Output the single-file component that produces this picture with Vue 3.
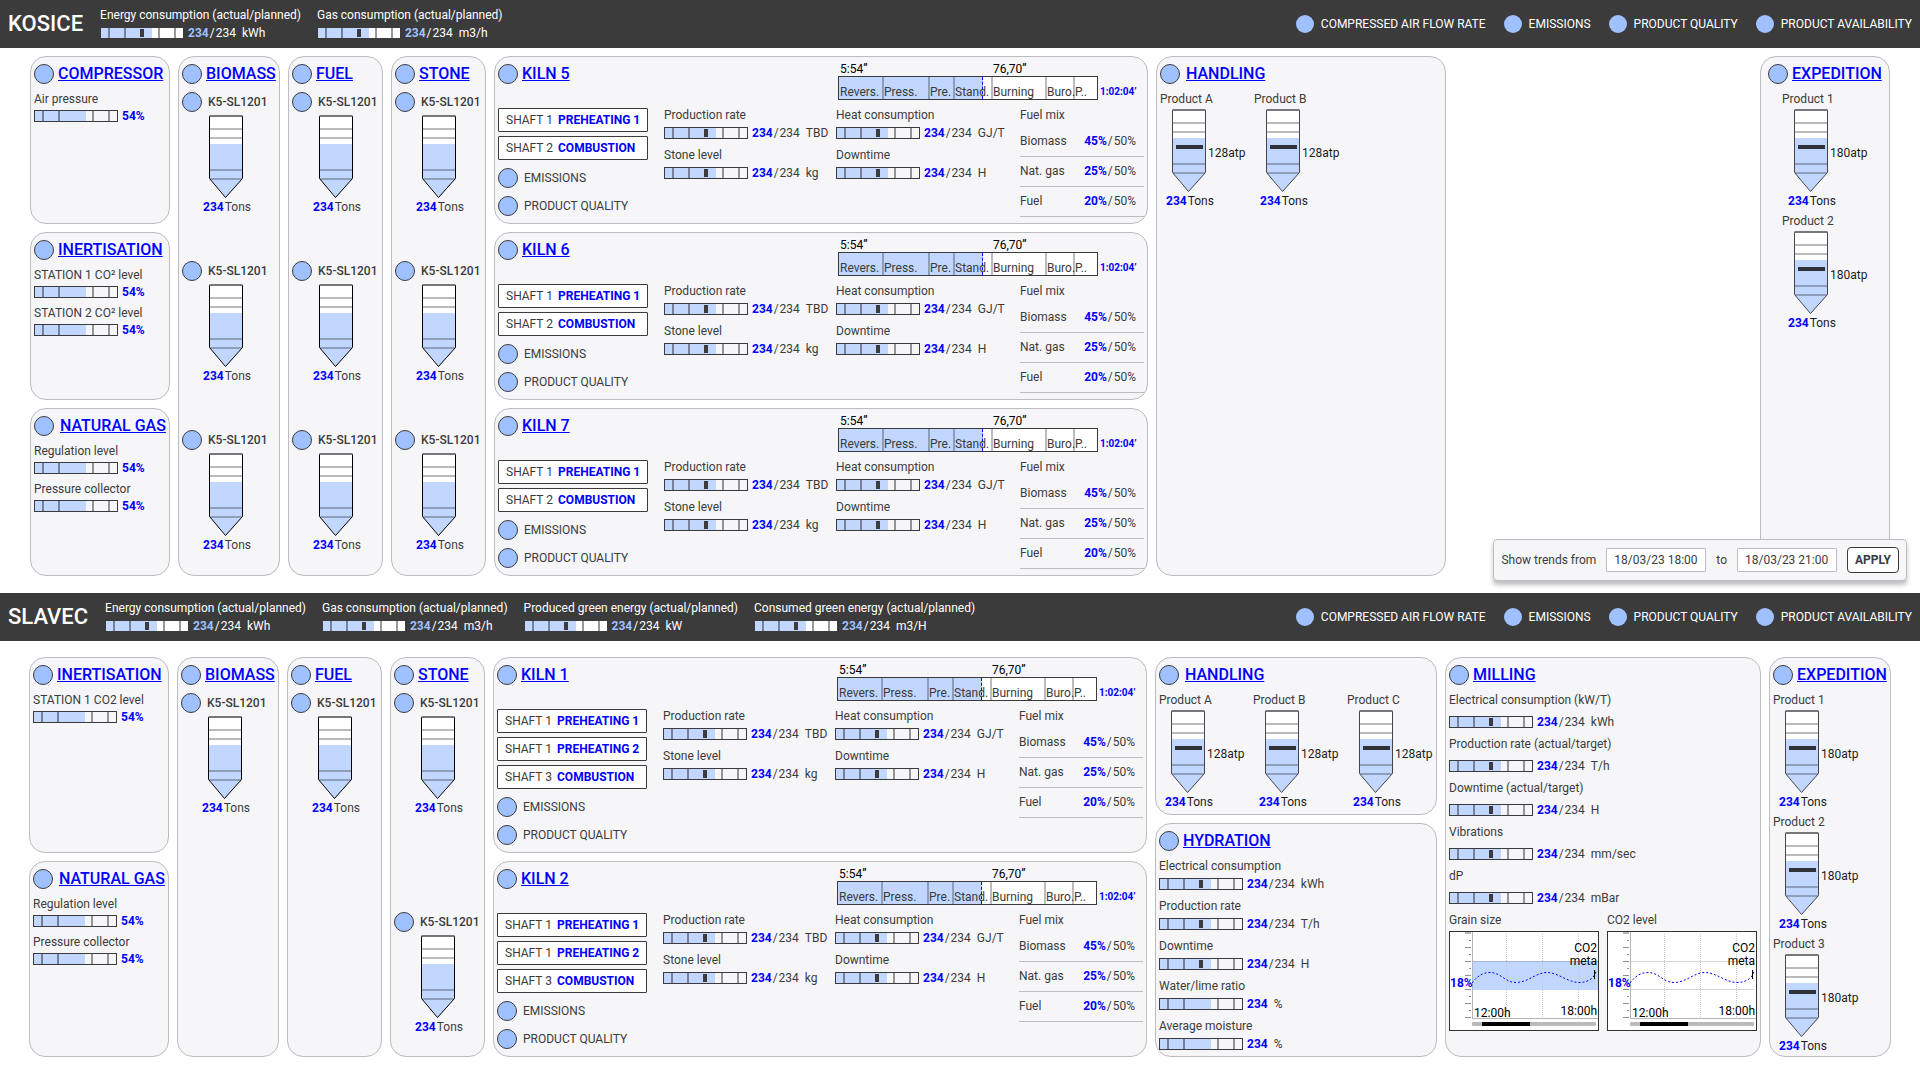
<script setup>
const actual = (label, unit) => ({ label, actual: '234', planned: '234', unit, mark: true })
const ratio = (label) => ({ label, actual: '234', unit: '%' })
const percent = (label) => ({ label, actual: '54%' })

const silo = () => ({ code: 'K5-SL1201', tons: '234' })
const product = (name, target) => ({ label: `Product ${name}`, target, tons: '234' })

const phases = [
  { name: 'Revers.', width: 43 },
  { name: 'Press.', width: 46 },
  { name: 'Pre.', width: 25 },
  { name: 'Stand.', width: 38 },
  { name: 'Burning', width: 54 },
  { name: 'Buro.', width: 28 },
  { name: 'P..', width: 24 },
]

const kilnMeters = [
  [actual('Production rate', 'TBD'), actual('Stone level', 'kg')],
  [actual('Heat consumption', 'GJ/T'), actual('Downtime', 'H')],
]

const fuelMix = [
  { name: 'Biomass', actual: '45%' },
  { name: 'Nat. gas', actual: '25%' },
  { name: 'Fuel', actual: '20%' },
]

const kiln = (number, shafts) => ({ title: `KILN ${number}`, type: 'kiln', shafts })
const twoShafts = [
  { name: 'SHAFT 1', state: 'PREHEATING 1' },
  { name: 'SHAFT 2', state: 'COMBUSTION' },
]
const threeShafts = [
  { name: 'SHAFT 1', state: 'PREHEATING 1' },
  { name: 'SHAFT 1', state: 'PREHEATING 2' },
  { name: 'SHAFT 3', state: 'COMBUSTION' },
]

const silos = (title, count) => ({
  title,
  type: 'silos',
  silos: Array.from({ length: count }, silo),
})
const meters = (title, list, extra = {}) => ({ title, type: 'meters', meters: list, ...extra })

const naturalGas = () =>
  meters('NATURAL GAS', [percent('Regulation level'), percent('Pressure collector')], {
    tone: 'spaced',
  })

const statuses = ['COMPRESSED AIR FLOW RATE', 'EMISSIONS', 'PRODUCT QUALITY', 'PRODUCT AVAILABILITY']

const sites = [
  {
    name: 'KOSICE',
    id: 'kosice',
    trends: true,
    totals: [
      actual('Energy consumption (actual/planned)', 'kWh'),
      actual('Gas consumption (actual/planned)', 'm3/h'),
    ],
    columns: [
      {
        kind: 'utilities',
        cards: [
          meters('COMPRESSOR', [percent('Air pressure')]),
          meters('INERTISATION', [percent('STATION 1 CO² level'), percent('STATION 2 CO² level')]),
          naturalGas(),
        ],
      },
      { kind: 'biomass', cards: [silos('BIOMASS', 3)] },
      { kind: 'store', cards: [silos('FUEL', 3)] },
      { kind: 'store', cards: [silos('STONE', 3)] },
      { kind: 'kilns', cards: [kiln(5, twoShafts), kiln(6, twoShafts), kiln(7, twoShafts)] },
      {
        kind: 'handling',
        cards: [
          {
            title: 'HANDLING',
            type: 'products',
            tone: 'spaced',
            silos: [product('A', '128atp'), product('B', '128atp')],
          },
        ],
      },
      {
        kind: 'expedition',
        cards: [
          {
            title: 'EXPEDITION',
            type: 'products',
            silos: [product('1', '180atp'), product('2', '180atp')],
          },
        ],
      },
    ],
  },
  {
    name: 'SLAVEC',
    id: 'slavec',
    totals: [
      actual('Energy consumption (actual/planned)', 'kWh'),
      actual('Gas consumption (actual/planned)', 'm3/h'),
      actual('Produced green energy (actual/planned)', 'kW'),
      actual('Consumed green energy (actual/planned)', 'm3/H'),
    ],
    columns: [
      {
        kind: 'utilities',
        cards: [meters('INERTISATION', [percent('STATION 1 CO2 level')]), naturalGas()],
      },
      { kind: 'biomass', cards: [silos('BIOMASS', 1)] },
      { kind: 'store', cards: [silos('FUEL', 1)] },
      { kind: 'store', cards: [silos('STONE', 2)] },
      { kind: 'kilns', cards: [kiln(1, threeShafts), kiln(2, threeShafts)] },
      {
        kind: 'handling',
        cards: [
          {
            title: 'HANDLING',
            type: 'products',
            tone: 'spaced fitted',
            silos: [product('A', '128atp'), product('B', '128atp'), product('C', '128atp')],
          },
          meters('HYDRATION', [
            actual('Electrical consumption', 'kWh'),
            actual('Production rate', 'T/h'),
            actual('Downtime', 'H'),
            ratio('Water/lime ratio'),
            ratio('Average moisture'),
          ], { tone: 'medium' }),
        ],
      },
      {
        kind: 'milling',
        cards: [
          meters('MILLING', [
            actual('Electrical consumption (kW/T)', 'kWh'),
            actual('Production rate (actual/target)', 'T/h'),
            actual('Downtime (actual/target)', 'H'),
            actual('Vibrations', 'mm/sec'),
            actual('dP', 'mBar'),
          ], {
            tone: 'loose',
            charts: [{ label: 'Grain size', band: true }, { label: 'CO2 level' }],
          }),
        ],
      },
      {
        kind: 'expedition',
        cards: [
          {
            title: 'EXPEDITION',
            type: 'products',
            silos: [product('1', '180atp'), product('2', '180atp'), product('3', '180atp')],
          },
        ],
      },
    ],
  },
]

const majorTicks = [16, 30, 44, 58, 72, 86]
const minorTicks = [9, 23, 37, 51, 65, 79]
</script>

<template>
  <main class="page">
    <section v-for="site in sites" :key="site.id" class="site" :class="site.id">
      <header class="topbar">
        <h1>{{ site.name }}</h1>
        <div class="totals">
          <div v-for="m in site.totals" :key="m.label" class="meter">
            <span class="label">{{ m.label }}</span>
            <div class="reading">
              <span class="bar"><span class="mark"></span></span>
              <b>{{ m.actual }}</b><span class="slash">/</span><span>{{ m.planned }}</span>
              <span class="unit">{{ m.unit }}</span>
            </div>
          </div>
        </div>
        <ul class="statuses">
          <li v-for="s in statuses" :key="s"><span class="dot"></span>{{ s }}</li>
        </ul>
      </header>

      <div class="board">
        <div v-for="(column, c) in site.columns" :key="c" class="column" :class="column.kind">
          <article
            v-for="card in column.cards"
            :key="card.title"
            class="card"
            :class="[card.type, card.tone]"
          >
            <div class="head">
              <h2><span class="lamp"></span><a href="#">{{ card.title }}</a></h2>
              <div v-if="card.type === 'kiln'" class="cycle">
                <div class="cycle-times"><span>5:54”</span><span>76,70”</span></div>
                <div class="cycle-row">
                  <div class="phases">
                    <span class="progress"></span>
                    <span
                      v-for="p in phases"
                      :key="p.name"
                      class="phase"
                      :style="{ width: p.width + 'px' }"
                    >{{ p.name }}</span>
                  </div>
                  <b class="total-time">1:02:04’</b>
                </div>
              </div>
            </div>

            <div v-if="card.type === 'meters'" class="meter-list">
              <div v-for="m in card.meters" :key="m.label" class="meter">
                <span class="label">{{ m.label }}</span>
                <div class="reading">
                  <span class="bar"><span v-if="m.mark" class="mark"></span></span>
                  <b>{{ m.actual }}</b>
                  <template v-if="m.planned"><span class="slash">/</span><span>{{ m.planned }}</span></template>
                  <span v-if="m.unit" class="unit">{{ m.unit }}</span>
                </div>
              </div>
            </div>

            <div v-if="card.charts" class="charts">
              <figure v-for="chart in card.charts" :key="chart.label">
                <figcaption class="label">{{ chart.label }}</figcaption>
                <svg class="chart" width="150" height="100" viewBox="0 0 150 100">
                  <rect x="0.5" y="0.5" width="149" height="99" fill="#fff" stroke="#333" />
                  <rect v-if="chart.band" x="23" y="30" width="126" height="29" fill="#c2d7ff" />
                  <path v-if="chart.band" d="M23 30.5H149" stroke="#a9b6d0" />
                  <path v-else d="M23 30.5H147M23 58.5H147" stroke="#d5d5d8" />
                  <path d="M57.5 3V87M93.5 3V87M129.5 3V87" stroke="#c8c8d0" stroke-dasharray="1 1" />
                  <path d="M23.5 1V87.5H149" fill="none" stroke="#b5b5b9" />
                  <path d="M16 2H22" stroke="#b5b5b9" stroke-width="2" />
                  <path v-for="y in majorTicks" :key="y" :d="`M16 ${y}.5H22`" stroke="#8f8f93" />
                  <path v-for="y in minorTicks" :key="y" :d="`M20 ${y}.5H22`" stroke="#8f8f93" />
                  <path
                    d="M23 52C29 44 35 41.500 41 41.500C52 41.500 56 51.500 67 51.500C79 51.500 87 41.500 98 41.500C109 41.500 119 51.500 130 51.500C140 51.500 146 46 147 40"
                    fill="none"
                    stroke="#00f"
                    stroke-dasharray="2 2"
                  />
                  <path d="M145.500 39V48" stroke="#000" />
                  <rect x="23" y="91" width="124" height="4" rx="1" fill="#bababe" />
                  <rect x="33" y="91" width="48" height="4" fill="#000" />
                  <text x="1" y="56" class="now">18%</text>
                  <text x="148" y="21" text-anchor="end">CO2</text>
                  <text x="148" y="34" text-anchor="end">meta</text>
                  <text x="25" y="86">12:00h</text>
                  <text x="148" y="84" text-anchor="end">18:00h</text>
                </svg>
              </figure>
            </div>

            <div v-if="card.silos" class="silo-list">
              <div v-for="(s, i) in card.silos" :key="i" class="silo">
                <span v-if="s.code" class="code"><span class="lamp"></span>{{ s.code }}</span>
                <span v-else class="label">{{ s.label }}</span>
                <div class="vessel">
                  <svg width="34" height="84" viewBox="0 0 34 84">
                    <path d="M1 1H33V64L17 82.500L1 64Z" fill="#fff" />
                    <path d="M1 29H33V64L17 82.500L1 64Z" fill="#c2d7ff" />
                    <path d="M1 14H33M1 23H33M1 55H33M1 64H33" stroke="#000" stroke-opacity="0.270" stroke-width="2" />
                    <path class="outline" d="M0.500 1V63.500L16.500 82.500L33.500 63.500V1" fill="none" />
                    <path d="M0.500 1H33.500" stroke="#777" stroke-width="2" />
                    <rect v-if="s.target" x="4" y="36" width="27" height="4" fill="#30323a" />
                  </svg>
                  <span v-if="s.target" class="target">{{ s.target }}</span>
                </div>
                <span class="tons"><b>{{ s.tons }}</b>Tons</span>
              </div>
            </div>

            <div v-if="card.type === 'kiln'" class="kiln-body">
              <div class="shafts">
                <div v-for="s in card.shafts" :key="s.state" class="shaft">
                  {{ s.name }}<b>{{ s.state }}</b>
                </div>
                <div class="check first"><span class="lamp"></span>EMISSIONS</div>
                <div class="check"><span class="lamp"></span>PRODUCT QUALITY</div>
              </div>
              <div v-for="(group, g) in kilnMeters" :key="g" class="kiln-meters">
                <div v-for="m in group" :key="m.label" class="meter">
                  <span class="label">{{ m.label }}</span>
                  <div class="reading">
                    <span class="bar"><span class="mark"></span></span>
                    <b>{{ m.actual }}</b><span class="slash">/</span><span>{{ m.planned }}</span>
                    <span class="unit">{{ m.unit }}</span>
                  </div>
                </div>
              </div>
              <table class="fuel-mix">
                <caption>Fuel mix</caption>
                <tbody>
                  <tr v-for="f in fuelMix" :key="f.name">
                    <th scope="row">{{ f.name }}</th>
                    <td><b>{{ f.actual }}</b><span class="slash">/</span>50%</td>
                  </tr>
                </tbody>
              </table>
            </div>
          </article>
        </div>
      </div>

      <form v-if="site.trends" class="trends" @submit.prevent>
        <label for="trend-from">Show trends from</label>
        <input id="trend-from" type="text" value="18/03/23 18:00" />
        <label for="trend-to">to</label>
        <input id="trend-to" type="text" value="18/03/23 21:00" />
        <button type="submit">APPLY</button>
      </form>
    </section>
  </main>
</template>

<style>
body {
  margin: 0;
  background: #fff;
}
</style>

<style scoped>
.page {
  font: 400 12px/16px Roboto, sans-serif;
  color: #3b3b3b;
}
.page * {
  box-sizing: border-box;
}
.site {
  position: relative;
}
b {
  font-weight: 700;
  color: #0000ff;
}

/* Top bar */
.topbar {
  display: flex;
  align-items: center;
  height: 48px;
  padding: 0 8px;
  background: #3b3b3b;
  color: #fff;
}
.topbar h1 {
  margin: 0 17px 0 0;
  font-size: 22px;
  font-weight: 500;
  line-height: 24px;
}
.totals {
  display: flex;
  gap: 16px;
}
.topbar b {
  color: #9fc1ff;
}
.topbar .bar {
  border-color: #3b3b3b;
  background-color: #fff;
}
.statuses {
  display: flex;
  gap: 18px;
  margin: 0 0 0 auto;
  padding: 0;
  list-style: none;
}
.statuses li {
  display: flex;
  align-items: center;
  gap: 7px;
}
.dot {
  width: 18px;
  height: 18px;
  border-radius: 50%;
  background: #9fc1ff;
}

/* Board */
.board {
  display: flex;
  gap: 8px;
  padding: 8px 30px 17px;
  min-height: 545px;
}
.slavec .board {
  padding: 16px 29px 23px;
  min-height: 439px;
}
.column {
  display: flex;
  flex: none;
  flex-direction: column;
  gap: 8px;
}
.utilities {
  width: 140px;
}
.biomass {
  width: 102px;
}
.store {
  width: 95px;
}
.kilns {
  width: 654px;
}
.slavec .kilns {
  flex: 1 0 654px;
}
.handling {
  width: 290px;
}
.slavec .handling {
  width: 282px;
}
.milling {
  width: 316px;
}
.expedition {
  width: 130px;
  margin-left: auto;
}
.slavec .expedition {
  width: 122px;
}
.card {
  flex: 1;
  padding: 7px 3px 0;
  border: 1px solid #bcbcc1;
  border-radius: 16px;
  background: #f6f6f9;
}
.card.fitted {
  flex: none;
}
h2 {
  display: flex;
  align-items: center;
  gap: 4px;
  height: 20px;
  margin: 0;
  font-size: 16px;
  font-weight: 500;
  line-height: 20px;
  white-space: nowrap;
}
.spaced h2 {
  gap: 6px;
}
h2 a {
  color: #0000ff;
}
.lamp {
  flex: none;
  width: 20px;
  height: 20px;
  border: 1px solid #3b3b3b;
  border-radius: 50%;
  background: #9fc1ff;
}

/* Meters */
.meter {
  display: flex;
  flex-direction: column;
  gap: 2px;
}
.label {
  display: block;
  white-space: nowrap;
}
.reading {
  display: flex;
  align-items: center;
  height: 16px;
  white-space: nowrap;
}
.bar {
  position: relative;
  width: 84px;
  height: 12px;
  margin-right: 4px;
  border: 1px solid #3b3b3b;
  background-image:
    linear-gradient(#0006, #0006),
    linear-gradient(#0006, #0006),
    linear-gradient(#0006, #0006),
    linear-gradient(#0006, #0006),
    linear-gradient(#c2d7ff, #c2d7ff);
  background-repeat: no-repeat;
  background-size: 2px 100%, 2px 100%, 2px 100%, 2px 100%, 51px 100%;
  background-position: 7px 0, 23px 0, 57px 0, 73px 0, 0 0;
}
.mark {
  position: absolute;
  left: 39px;
  top: 1px;
  width: 4px;
  height: 8px;
  background: #3b3b3b;
}
.slash {
  margin: 0 1px;
}
.unit {
  margin-left: 6px;
}
.meter-list {
  display: flex;
  flex-direction: column;
  gap: 5px;
  margin-top: 7px;
}
.meter-list .meter {
  gap: 1px;
}
.medium .meter-list {
  gap: 6px;
}
.medium .meter {
  gap: 2px;
}
.loose .meter-list,
.loose .meter {
  gap: 6px;
}
.charts {
  display: flex;
  gap: 8px;
  margin-top: 6px;
}
figure {
  margin: 0;
}
.chart {
  display: block;
  margin-top: 3px;
  fill: #000;
  font-size: 12px;
}
.now {
  font-weight: 700;
  fill: #0000ff;
}

/* Silos */
.silos .silo-list {
  width: 88px;
  margin-top: 8px;
}
.silos .silo {
  display: flex;
  flex-direction: column;
  align-items: center;
  height: 169px;
}
.slavec .silos .silo {
  height: 219px;
}
.silos .silo:last-child,
.slavec .silos .silo:last-child {
  height: auto;
}
.code {
  display: flex;
  align-items: center;
  align-self: flex-start;
  gap: 6px;
  margin-bottom: 3px;
  font-weight: 500;
  white-space: nowrap;
}
.vessel {
  display: flex;
  align-items: center;
}
.vessel svg {
  display: block;
  flex: none;
}
.outline {
  stroke: #000;
}
.products .outline {
  stroke: #44444a;
}
.products .silo-list {
  display: flex;
  margin-top: 7px;
}
.products .silo {
  flex: none;
  width: 94px;
  height: 122px;
}
.products .label {
  margin-bottom: 2px;
}
.products .vessel {
  padding-left: 12px;
  color: #1c1c1c;
}
.target {
  margin-left: 2px;
  padding-top: 4px;
}
.tons {
  display: block;
  padding-left: 2px;
}
.tons b {
  margin-right: 1px;
}
.products .tons {
  padding-left: 6px;
  color: #1c1c1c;
}
.expedition .silo-list {
  flex-direction: column;
}
.expedition .silo:last-child {
  height: auto;
}
.kosice .expedition .head {
  padding-left: 4px;
}
.kosice .expedition .silo-list {
  padding-left: 18px;
}

/* Kilns */
.card.kiln {
  padding-top: 5px;
}
.kiln .head {
  display: grid;
  grid-template-columns: 340px 1fr;
}
.kiln h2 {
  margin-top: 2px;
}
.cycle-times {
  display: grid;
  grid-template-columns: 153px 1fr;
  padding-left: 2px;
  line-height: 14px;
  color: #000;
}
.cycle-row {
  display: flex;
  align-items: center;
  gap: 2px;
}
.phases {
  position: relative;
  display: flex;
  align-items: flex-end;
  width: 260px;
  height: 24px;
  border: 1px solid #3b3b3b;
  background: #fff;
}
.progress {
  position: absolute;
  left: 0;
  top: 0;
  width: 144px;
  height: 22px;
  border-right: 1px dashed #0000ff;
  background: #c2d7ff;
}
.phase {
  position: relative;
  height: 22px;
  padding-top: 8px;
  border-left: 2px solid #0004;
  line-height: 14px;
  white-space: nowrap;
}
.progress + .phase {
  padding-left: 1px;
  border-left: 0;
}
.total-time {
  padding-top: 8px;
  font-size: 10px;
  line-height: 16px;
}
.kiln-body {
  display: grid;
  grid-template-columns: 166px 172px 184px 124px;
  align-items: start;
  margin-top: 7px;
}
.shafts {
  display: flex;
  flex-direction: column;
  gap: 4px;
  width: 150px;
  padding-top: 1px;
}
.shaft {
  display: flex;
  align-items: center;
  gap: 5px;
  height: 24px;
  padding-left: 7px;
  border: 1px solid #3b3b3b;
  border-radius: 1px;
  background: #fff;
  white-space: nowrap;
}
.check {
  display: flex;
  align-items: center;
  gap: 6px;
  height: 24px;
  white-space: nowrap;
}
.check.first {
  margin-top: 2px;
}
.kiln-meters {
  display: flex;
  flex-direction: column;
  gap: 6px;
}
.fuel-mix {
  width: 124px;
  border-collapse: collapse;
}
.fuel-mix caption {
  padding-bottom: 3px;
  text-align: left;
}
.fuel-mix th,
.fuel-mix td {
  height: 30px;
  padding: 0;
  border-bottom: 1px solid #bcbcc1;
  font-weight: 400;
  text-align: left;
}
.fuel-mix td {
  padding-right: 8px;
  text-align: right;
}

/* Trend range */
.trends {
  position: absolute;
  right: 13px;
  bottom: 12px;
  display: flex;
  align-items: center;
  gap: 10px;
  height: 42px;
  padding: 0 7px;
  border: 1px solid #bcbcc1;
  border-radius: 4px;
  background: #f6f6f9;
  box-shadow: 0 4px 4px #00000040;
}
.trends input {
  width: 100px;
  height: 24px;
  padding: 0 7px;
  border: 1px solid #bcbcc1;
  border-radius: 1px;
  background: #fff;
  color: inherit;
  font: inherit;
}
.trends button {
  width: 52px;
  height: 26px;
  padding: 0;
  border: 1px solid #3b3b3b;
  border-radius: 4px;
  background: #fff;
  color: inherit;
  font: inherit;
  font-weight: 700;
}
</style>
